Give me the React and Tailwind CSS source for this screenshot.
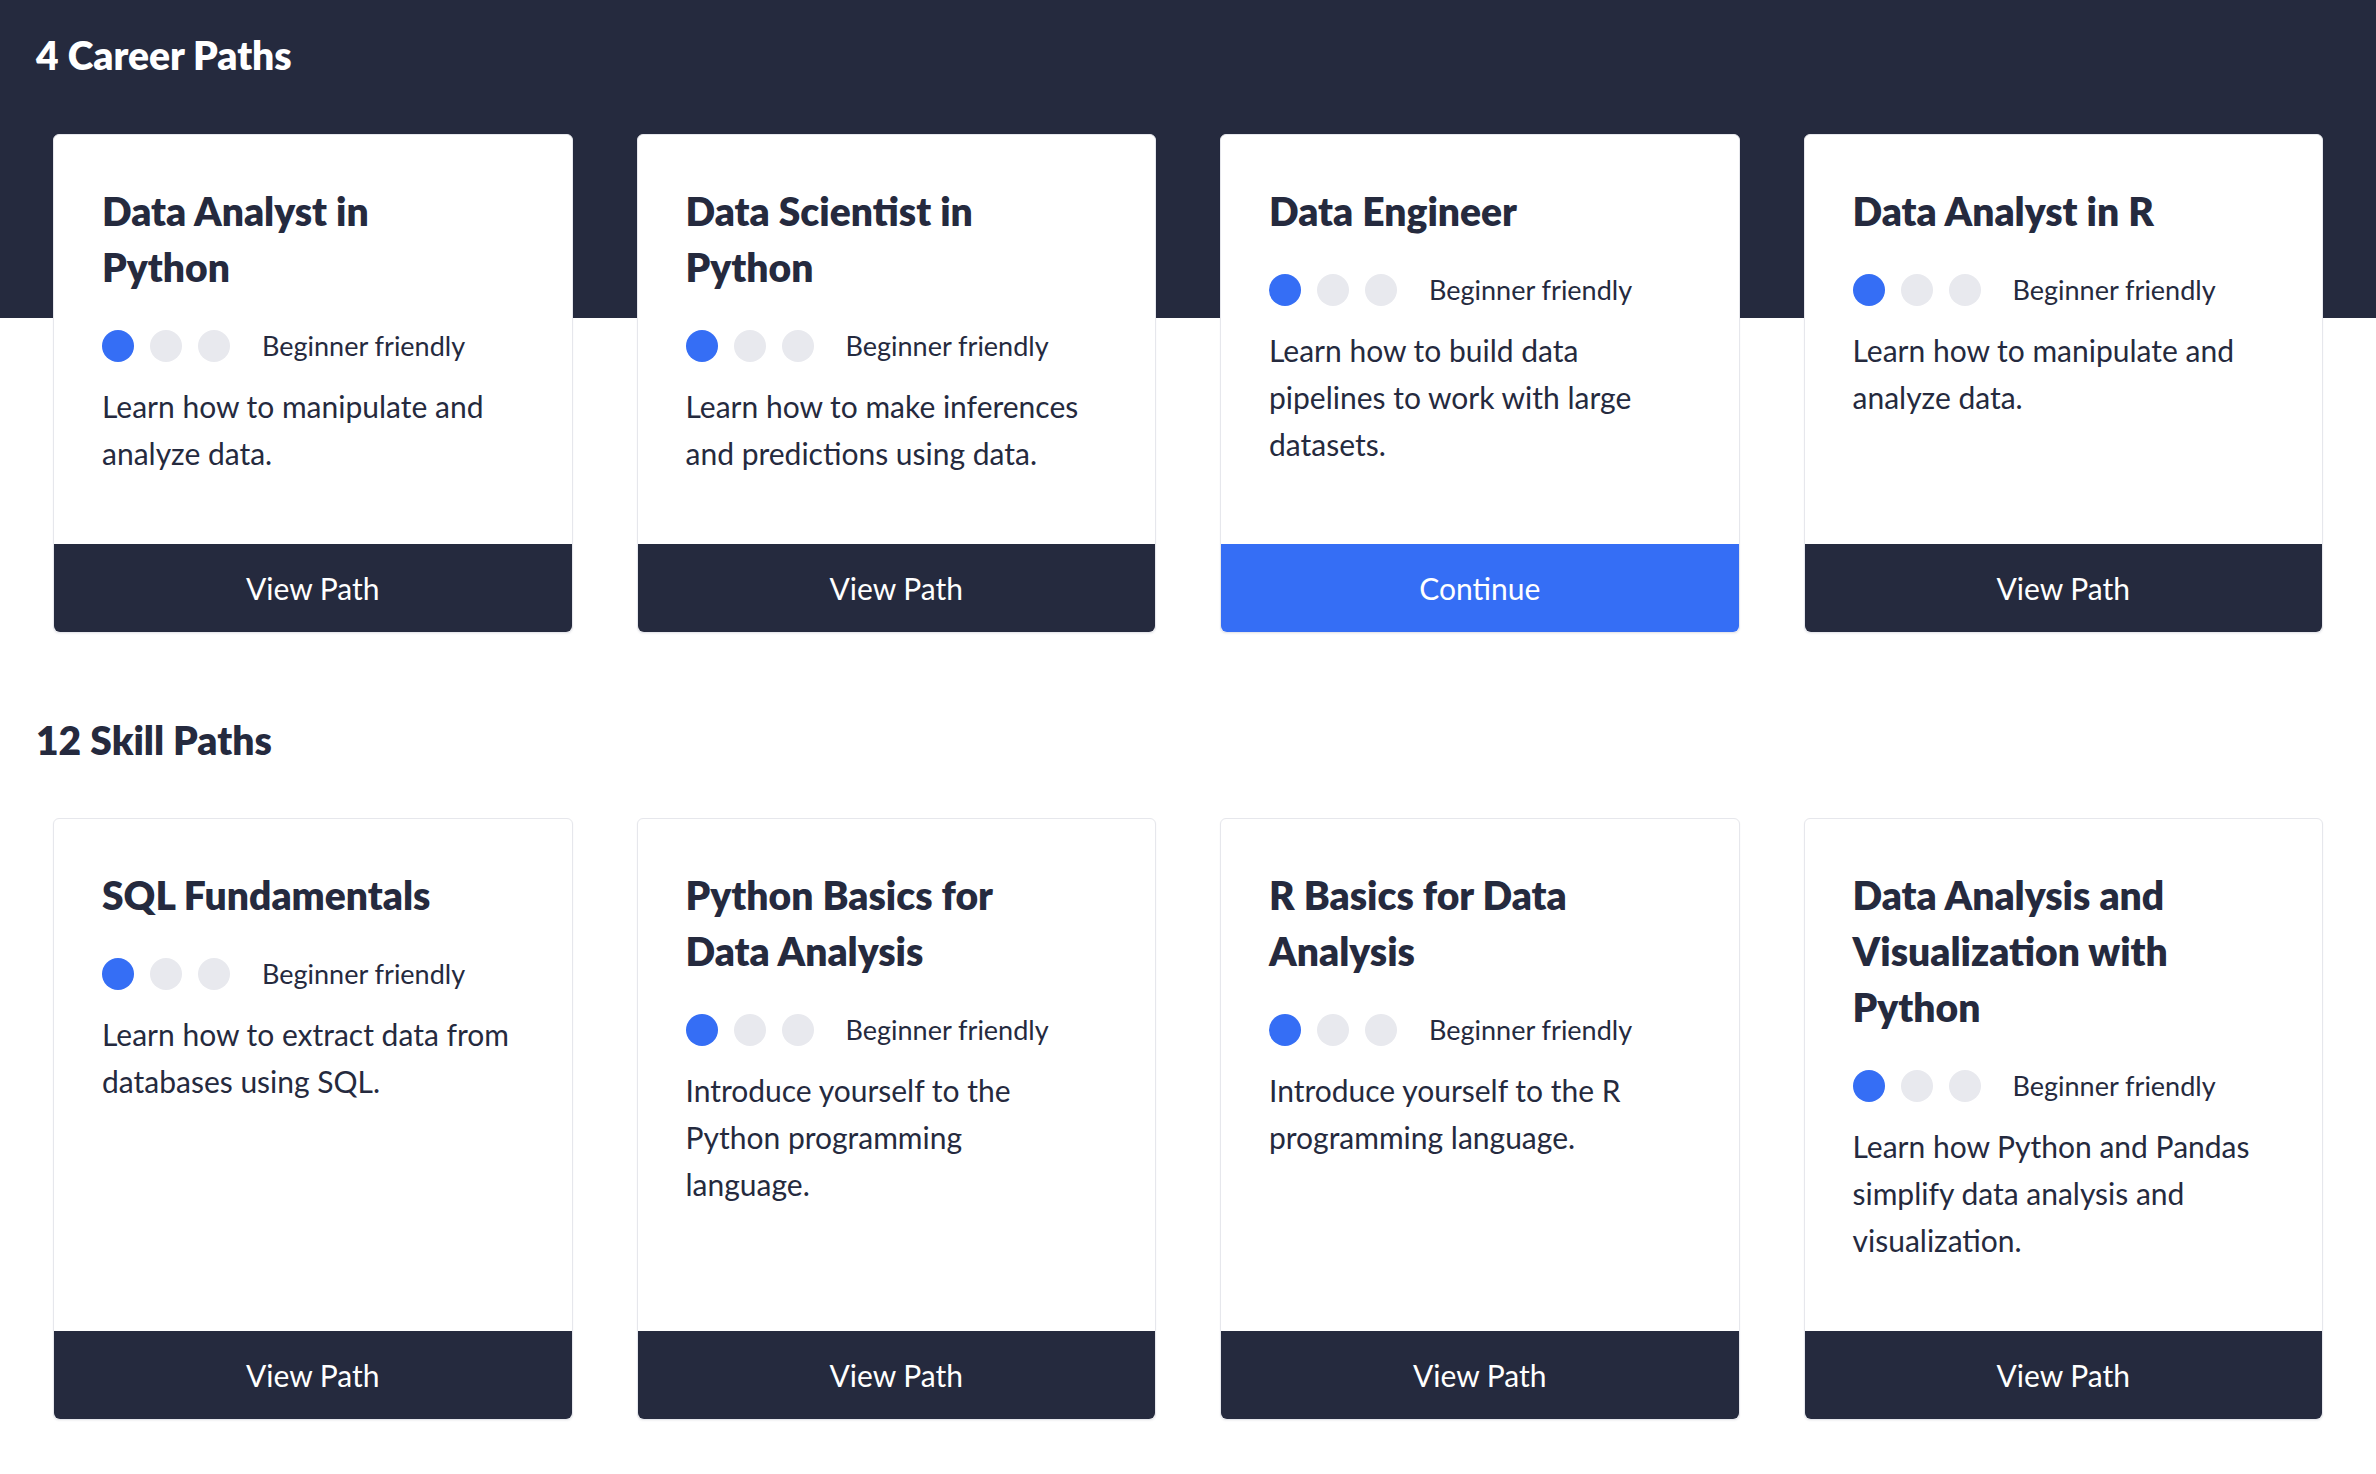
import React from 'react';

const careerPaths = [
  { title: 'Data Analyst in Python', text: 'Learn how to manipulate and analyze data.', action: 'View Path' },
  { title: 'Data Scientist in Python', text: 'Learn how to make inferences and predictions using data.', action: 'View Path' },
  { title: 'Data Engineer', text: 'Learn how to build data pipelines to work with large datasets.', action: 'Continue', active: true },
  { title: 'Data Analyst in R', text: 'Learn how to manipulate and analyze data.', action: 'View Path' },
];

const skillPaths = [
  { title: 'SQL Fundamentals', text: 'Learn how to extract data from databases using SQL.', action: 'View Path' },
  {
    title: 'Python Basics for Data Analysis',
    text: (
      <>
        Introduce yourself to the Python programming
        <br />
        language.
      </>
    ),
    action: 'View Path',
  },
  { title: 'R Basics for Data Analysis', text: 'Introduce yourself to the R programming language.', action: 'View Path' },
  { title: 'Data Analysis and Visualization with Python', text: 'Learn how Python and Pandas simplify data analysis and visualization.', action: 'View Path' },
];

const PathCard = ({ title, text, action, active }) => {
  return (
    <div className="flex flex-col bg-white border border-[#e6e7ec] rounded-md shadow-[0_1px_2px_rgba(37,42,62,0.06)]">
      <div className="flex-1 px-12 pt-12 pb-[67px]">
        <h3 className="max-w-[340px] text-[39px] leading-[56px] font-extrabold text-[#252a3e]">{title}</h3>
        <div className="flex items-center h-8 mt-[35px]">
          {/* Difficulty dots */}
          <span className="w-8 h-8 rounded-full bg-[#356ef5]" />
          <span className="w-8 h-8 rounded-full bg-[#e8e9ee] ml-4" />
          <span className="w-8 h-8 rounded-full bg-[#e8e9ee] ml-4" />
          <span className="ml-8 text-[27px] text-[#252a3e]">Beginner friendly</span>
        </div>
        <p className="mt-[21px] text-[30px] leading-[47px] text-[#252a3e]">{text}</p>
      </div>
      <button
        className={
          'h-[88px] rounded-b-md text-[30px] text-white ' +
          (active ? 'bg-[#356ef5]' : 'bg-[#252a3e]')
        }
      >
        {action}
      </button>
    </div>
  );
};

const App = () => {
  return (
    <div
      className="min-h-screen bg-white bg-[linear-gradient(to_bottom,#252a3e_318px,#ffffff_318px)] px-9 pb-[54px]"
      style={{ fontFamily: 'Lato, "Noto Sans", sans-serif' }}
    >
      {/* Career paths */}
      <section className="pt-[34px]">
        <h2 className="text-[39px] leading-[43px] font-extrabold text-white">4 Career Paths</h2>
        <div className="grid grid-cols-4 gap-16 mt-[57px] px-[17px]">
          {careerPaths.map((p) => (
            <PathCard key={p.title} {...p} />
          ))}
        </div>
      </section>

      {/* Skill paths */}
      <section className="mt-[86px]">
        <h2 className="text-[39px] leading-[43px] font-extrabold text-[#252a3e]">12 Skill Paths</h2>
        <div className="grid grid-cols-4 gap-16 mt-[56px] px-[17px]">
          {skillPaths.map((p) => (
            <PathCard key={p.title} {...p} />
          ))}
        </div>
      </section>
    </div>
  );
};

export default App;
